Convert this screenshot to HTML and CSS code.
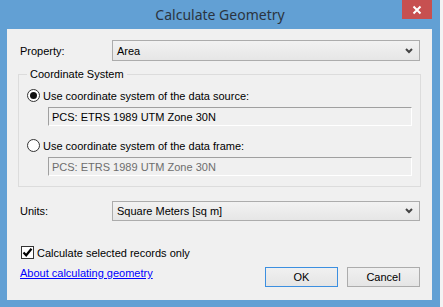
FILE: index.html
```html
<!DOCTYPE html>
<html lang="en">
<head>
    <meta charset="UTF-8">
    <title>Calculate Geometry</title>
    <link rel="stylesheet" href="styles.css">
</head>
<body>
<div class="frame">
    <div class="titlebar">
        <span class="title">Calculate Geometry</span>
        <div class="close">
            <svg width="10" height="10" viewBox="0 0 10 10"><path d="M1.5 1.5 L8.5 8.5 M8.5 1.5 L1.5 8.5" stroke="#fff" stroke-width="2"/></svg>
        </div>
    </div>

    <div class="client">
        <div class="row">
            <span class="label">Property:</span>
            <div class="select">Area
                <svg class="chev" width="8" height="6" viewBox="0 0 8 6"><path d="M1 1 L4 4 L7 1" stroke="#444" stroke-width="2" fill="none"/></svg>
            </div>
        </div>

        <fieldset class="group">
            <legend>Coordinate System</legend>
            <div class="opt">
                <span class="radio on"></span>Use coordinate system of the data source:
            </div>
            <div class="textbox">PCS: ETRS 1989 UTM Zone 30N</div>
            <div class="opt second">
                <span class="radio"></span>Use coordinate system of the data frame:
            </div>
            <div class="textbox disabled">PCS: ETRS 1989 UTM Zone 30N</div>
        </fieldset>

        <div class="row units">
            <span class="label">Units:</span>
            <div class="select">Square Meters [sq m]
                <svg class="chev" width="8" height="6" viewBox="0 0 8 6"><path d="M1 1 L4 4 L7 1" stroke="#444" stroke-width="2" fill="none"/></svg>
            </div>
        </div>

        <div class="check">
            <span class="box">
                <svg width="11" height="11" viewBox="0 0 11 11"><path d="M1.5 5.5 L4.2 8.3 L9.5 1.8" stroke="#000" stroke-width="2.2" fill="none"/></svg>
            </span>Calculate selected records only
        </div>

        <div class="footer">
            <a href="#" class="link">About calculating geometry</a>
            <div class="buttons">
                <button class="btn default">OK</button>
                <button class="btn">Cancel</button>
            </div>
        </div>
    </div>
</div>
</body>
</html>
```

FILE: styles.css
```css
body { margin: 0; background: #f3f3f3; font-family: "Liberation Sans", Arial, sans-serif; font-size: 11px; color: #000; }
.frame { width: 440px; height: 307px; background: #62a0d4; }
.titlebar { height: 29px; position: relative; text-align: center; }
.title { display: inline-block; padding-top: 5px; font-family: "Noto Sans", sans-serif; font-size: 14px; color: #2b3440; }
.close { position: absolute; top: 0; left: 402px; width: 30px; height: 19px; background: #c75050; display: flex; align-items: center; justify-content: center; }

.client { background: #f0f0f0; margin: 0 8px 0 7px; height: 271px; box-sizing: border-box; padding: 11px 12px 0 13px; }
.row { display: flex; align-items: center; height: 21px; }
.label { width: 92px; }
.select { flex: 1; height: 21px; box-sizing: border-box; border: 1px solid #acacac; background: linear-gradient(#f2f2f2, #e6e6e6); display: flex; align-items: center; padding: 0 6px 0 4px; justify-content: space-between; }
.chev { margin-top: 1px; }

.group { margin: 7px -1px 0 -2px; padding: 8px 8px 10px 8px; border: 1px solid #dcdcdc; height: 119px; box-sizing: border-box; }
.group legend { margin-left: 0; padding: 0 3px; line-height: 13px; }
.opt { display: flex; align-items: center; height: 13px; }
.opt.second { margin-top: 13px; }
.radio { width: 11px; height: 11px; border: 1px solid #333; border-radius: 50%; background: #fff; margin-right: 3px; display: flex; align-items: center; justify-content: center; }
.radio.on::after { content: ""; width: 7px; height: 7px; border-radius: 50%; background: #111; }
.textbox { margin: 5px 0 0 21px; height: 19px; box-sizing: border-box; border: 1px solid; border-color: #a0a0a0 #fff #fff #a0a0a0; padding: 0 3px; display: flex; align-items: center; }
.textbox.disabled { color: #6d6d6d; }

.units { margin-top: 13px; }
.units .select { height: 20px; }

.check { display: flex; align-items: center; margin-top: 25px; margin-left: 1px; height: 13px; }
.box { width: 11px; height: 11px; border: 1px solid #333; background: #fff; margin-right: 3px; display: flex; align-items: center; justify-content: center; }

.footer { display: flex; justify-content: space-between; align-items: flex-start; margin-top: 8px; }
.link { color: #0000ff; line-height: 13px; }
.buttons { display: flex; gap: 9px; }
.btn { width: 73px; height: 20px; border: 1px solid #acacac; background: linear-gradient(#f0f0f0, #e5e5e5); font-family: "Liberation Sans", Arial, sans-serif; font-size: 11px; color: #000; padding: 0; }
.btn.default { border-color: #3c8fe0; }
```
